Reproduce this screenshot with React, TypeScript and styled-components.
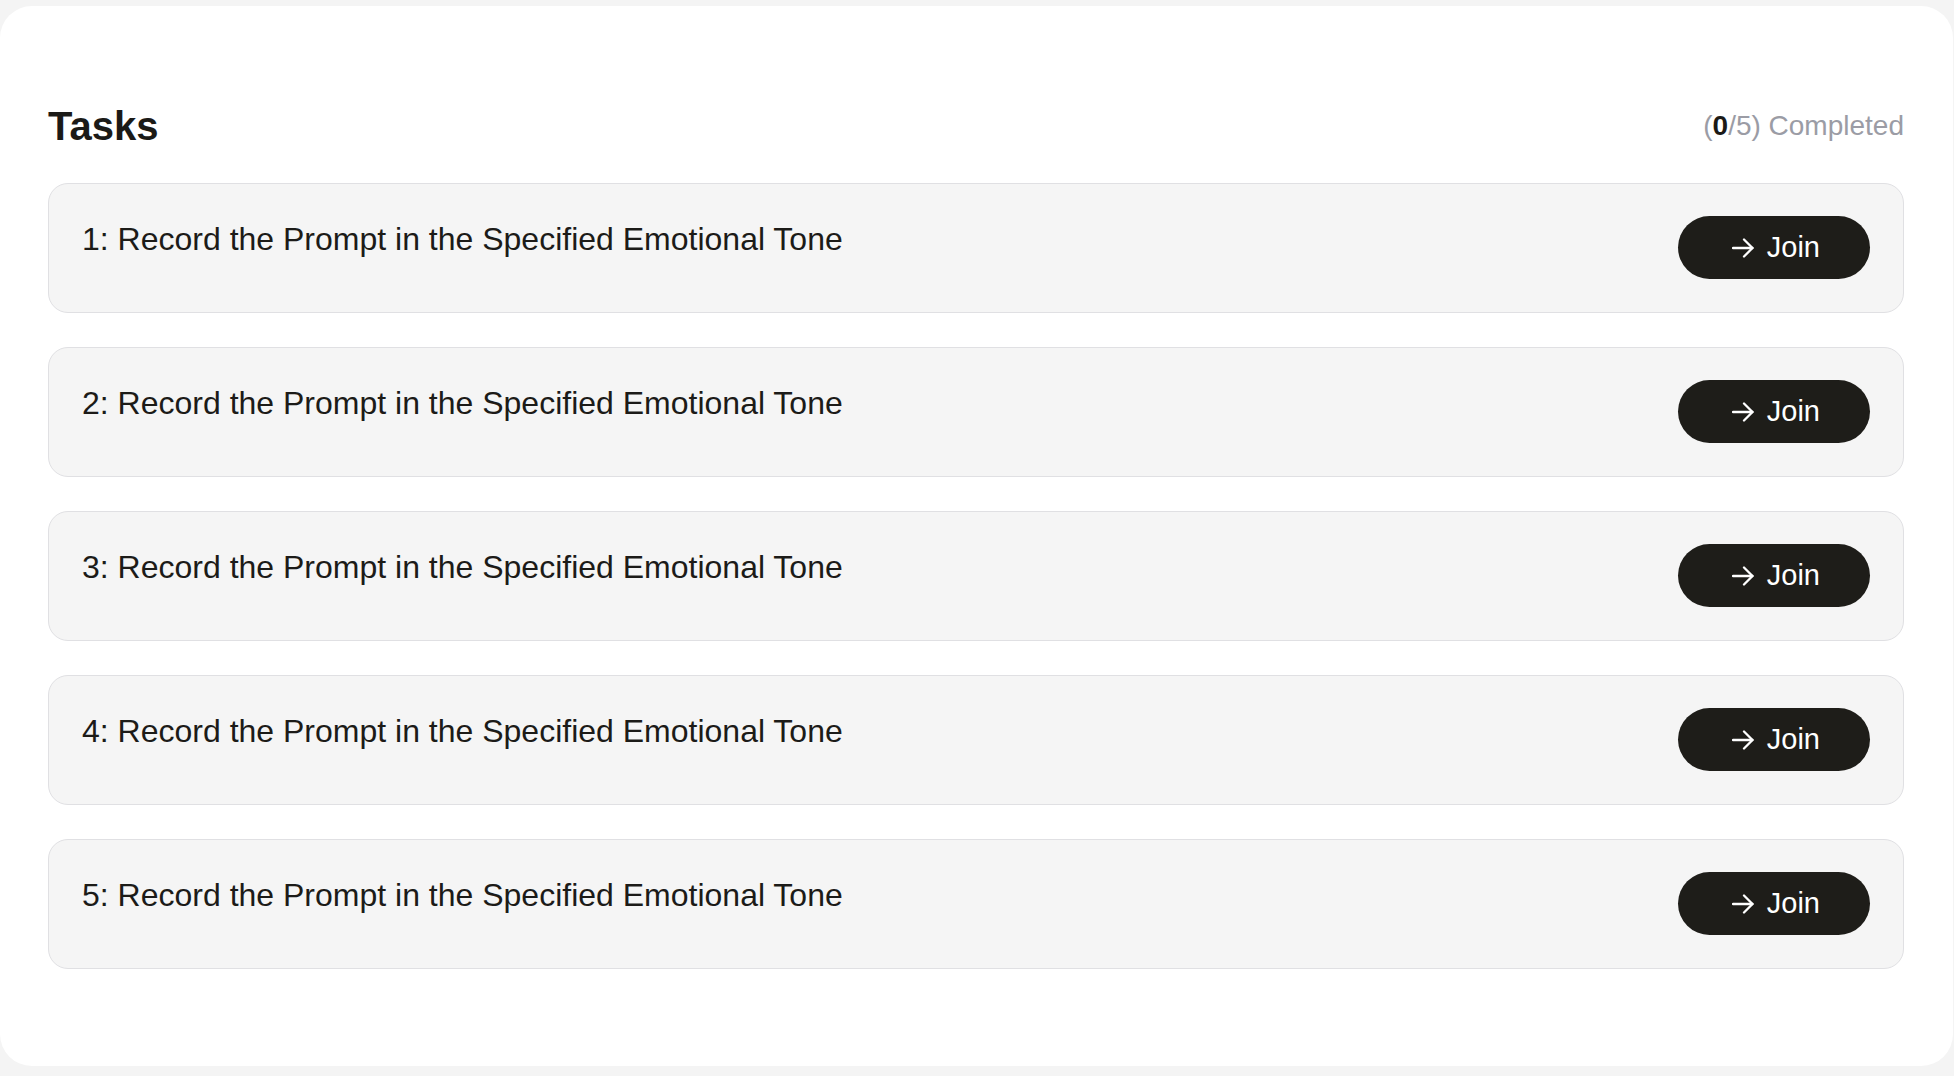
import React from "react";
import styled, { createGlobalStyle } from "styled-components";

const GlobalStyle = createGlobalStyle`
  html, body {
    margin: 0;
    padding: 0;
    background: #f4f4f4;
    font-family: "Liberation Sans", Arial, Helvetica, sans-serif;
  }
  * { box-sizing: border-box; }
`;

const Card = styled.main`
  margin: 6px 1px 11px 0;
  background: #ffffff;
  border-radius: 32px;
  padding: 96px 49px 97px 48px;
  display: flex;
  flex-direction: column;
  gap: 33px;
`;

const Header = styled.header`
  display: flex;
  align-items: center;
  justify-content: space-between;
  height: 48px;
`;

const Title = styled.h1`
  margin: 0;
  font-size: 40px;
  line-height: 48px;
  font-weight: 700;
  color: #1b1a17;
`;

const Progress = styled.div`
  font-size: 28px;
  line-height: 34px;
  color: #9b9ca5;
`;

const Done = styled.b`
  color: #1b1a17;
  font-weight: 700;
`;

const List = styled.section`
  display: flex;
  flex-direction: column;
  gap: 34px;
`;

const Row = styled.div`
  display: flex;
  align-items: flex-start;
  justify-content: space-between;
  background: #f5f5f5;
  border: 1px solid #e0e0e3;
  border-radius: 20px;
  padding: 32px 33px 33px 33px;
`;

const RowText = styled.div`
  font-size: 32px;
  line-height: 46px;
  color: #1c1b18;
`;

const JoinButton = styled.button`
  display: flex;
  align-items: center;
  gap: 13px;
  height: 63px;
  padding: 0 50px 0 54px;
  border: none;
  border-radius: 999px;
  background: #1e1d19;
  color: #ffffff;
  font-family: inherit;
  font-size: 29px;
  cursor: pointer;
`;

const Arrow = () => (
  <svg width="22" height="20" viewBox="0 0 22 20" fill="none" stroke="#fff" strokeWidth="2.3" strokeLinecap="round" strokeLinejoin="round">
    <path d="M1 10h19.5" />
    <path d="M12 1.5l8.5 8.5-8.5 8.5" />
  </svg>
);

const tasks = [1, 2, 3, 4, 5];

export default function App() {
  return (
    <>
      <GlobalStyle />
      <Card>
        <Header>
          <Title>Tasks</Title>
          <Progress>
            (<Done>0</Done>/5) Completed
          </Progress>
        </Header>
        <List>
          {tasks.map((n) => (
            <Row key={n}>
              <RowText>{n}: Record the Prompt in the Specified Emotional Tone</RowText>
              <JoinButton>
                <Arrow />
                Join
              </JoinButton>
            </Row>
          ))}
        </List>
      </Card>
    </>
  );
}
